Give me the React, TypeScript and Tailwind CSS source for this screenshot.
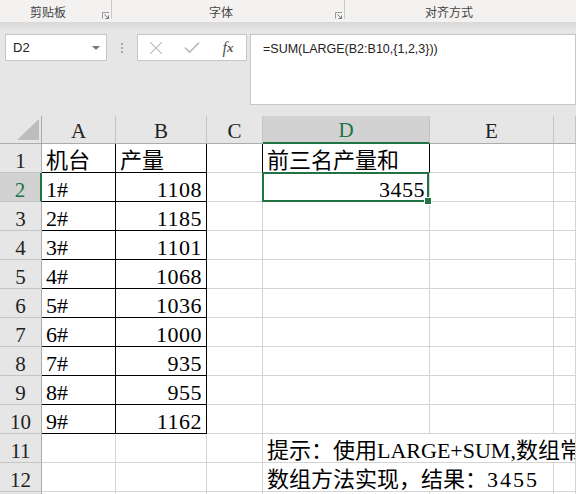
import React from "react";
import { X, Check } from "lucide-react";

const machines: [string, number][] = [
  ["1#", 1108],
  ["2#", 1185],
  ["3#", 1101],
  ["4#", 1068],
  ["5#", 1036],
  ["6#", 1000],
  ["7#", 935],
  ["8#", 955],
  ["9#", 1162],
];

const serif = "font-['Liberation_Serif','Noto_Sans_CJK_SC',serif]";

function Launcher() {
  return (
    <svg width="8" height="7" viewBox="0 0 8 7" className="mt-[12px]">
      <path d="M0.5 6.5V0.5H7" stroke="#9a9a9a" fill="none" />
      <path d="M2.5 2.5L6.5 6.5M3.5 6.5H6.5V3.5" stroke="#7a7a7a" fill="none" />
    </svg>
  );
}

function Ribbon() {
  return (
    <div className="h-[22px] bg-[#f3f2f1] flex font-['Noto_Sans_CJK_SC',sans-serif] text-[12px] text-[#444]">
      <div className="flex w-[112px] h-[19px] border-r border-r-[#c8c8c8]">
        <span className="w-[96px] text-center mt-[5px] leading-[13px]">剪贴板</span>
        <div className="ml-[6px]">
          <Launcher />
        </div>
      </div>
      <div className="flex w-[233px] h-[19px] border-r border-r-[#c8c8c8]">
        <span className="w-[218px] text-center mt-[5px] leading-[13px]">字体</span>
        <div className="ml-[5px]">
          <Launcher />
        </div>
      </div>
      <div className="flex w-[208px] h-[19px]">
        <span className="w-[208px] text-center mt-[5px] leading-[13px]">对齐方式</span>
      </div>
    </div>
  );
}

function FormulaBar() {
  return (
    <div className="h-[86px] flex items-start pt-[4px] font-['Liberation_Sans','Noto_Sans_CJK_SC',sans-serif]">
      <div className="ml-[5px] w-[102px] h-[27px] bg-white border border-[#c6c6c6] flex items-center justify-between pl-[7px] pr-[6px]">
        <span className="text-[13px] text-[#222]">D2</span>
        <svg width="8" height="4" viewBox="0 0 8 4">
          <path d="M0 0H8L4 4Z" fill="#7a7a7a" />
        </svg>
      </div>
      <div className="w-[30px] h-[27px] flex flex-col items-center justify-center gap-[2px]">
        <span className="w-[2px] h-[2px] bg-[#a8a8a8]" />
        <span className="w-[2px] h-[2px] bg-[#a8a8a8]" />
        <span className="w-[2px] h-[2px] bg-[#a8a8a8]" />
      </div>
      <div className="w-[110px] h-[27px] bg-white border border-[#c6c6c6] flex">
        <div className="w-[36px] flex items-center justify-center">
          <X size={22} strokeWidth={1.1} color="#b0b0b0" />
        </div>
        <div className="w-[36px] flex items-center justify-center">
          <Check size={20} strokeWidth={1.8} color="#b4b4b4" />
        </div>
        <div className="w-[36px] flex items-center justify-center text-[#555] italic font-['Liberation_Serif',serif] text-[16px] leading-none">
          f<span className="text-[13px] font-bold">x</span>
        </div>
      </div>
      <div className="ml-[3px] flex-1 h-[71px] bg-white border border-[#c6c6c6] pl-[12px] pt-[7px] text-[12.5px] text-[#222] leading-[14px] whitespace-nowrap">
        =SUM(LARGE(B2:B10,{"{"}1,2,3{"}"}))
      </div>
    </div>
  );
}

type Line = "grid" | "black";

function Cell({
  children,
  r = "grid",
  b = "grid",
  right,
  className = "",
}: {
  children?: React.ReactNode;
  r?: Line;
  b?: Line;
  right?: boolean;
  className?: string;
}) {
  const rc = r === "black" ? "border-r-black" : "border-r-[#d4d4d4]";
  const bc = b === "black" ? "border-b-black" : "border-b-[#d4d4d4]";
  return (
    <div
      className={`flex items-end overflow-hidden whitespace-nowrap bg-white border-r border-b ${rc} ${bc} px-[4px] leading-none text-[22px] text-black ${
        right ? "justify-end" : "justify-start"
      } ${className}`}
    >
      {children}
    </div>
  );
}

function ColHead({ label, active }: { label: string; active?: boolean }) {
  return (
    <div
      className={`flex items-end justify-center pb-[1px] leading-none text-[21px] border-r border-r-[#c4c4c4] ${
        active
          ? "bg-[#d2d2d2] text-[#217346] border-b-2 border-b-[#217346]"
          : "bg-[#e6e6e6] text-[#222] border-b border-b-[#ababab]"
      }`}
    >
      {label}
    </div>
  );
}

function RowHead({ n, active }: { n?: number; active?: boolean }) {
  return (
    <div
      className={`flex items-end justify-center leading-none text-[21px] border-b border-b-[#c4c4c4] ${
        active
          ? "bg-[#d2d2d2] text-[#217346] border-r-2 border-r-[#217346]"
          : "bg-[#e6e6e6] text-[#222] border-r border-r-[#ababab]"
      }`}
    >
      {n}
    </div>
  );
}

// digits in the reference run a little wider than Liberation Serif
const num = "tracking-[0.5px]";

function Sheet() {
  const rows: React.ReactNode[] = [];
  for (let n = 1; n <= 13; n++) {
    const inTable = n <= 10;
    const a = n === 1 ? "机台" : inTable ? machines[n - 2][0] : "";
    const bVal = n === 1 ? "产量" : inTable ? String(machines[n - 2][1]) : "";
    rows.push(<RowHead key={`h${n}`} n={n <= 12 ? n : undefined} active={n === 2} />);
    rows.push(
      <Cell key={`a${n}`} r={inTable ? "black" : "grid"} b={inTable ? "black" : "grid"}>
        {a}
      </Cell>
    );
    rows.push(
      <Cell
        key={`b${n}`}
        r={inTable ? "black" : "grid"}
        b={inTable ? "black" : "grid"}
        right={n !== 1}
        className={n !== 1 ? num : ""}
      >
        {bVal}
      </Cell>
    );
    rows.push(<Cell key={`c${n}`} r={n === 1 ? "black" : "grid"} />);
    if (n === 1) {
      rows.push(
        <Cell key="d1" r="black">
          前三名产量和
        </Cell>
      );
      rows.push(<Cell key="e1" />);
      rows.push(<Cell key="f1" />);
    } else if (n === 2) {
      rows.push(
        <div
          key="d2"
          className={`relative flex items-end justify-end bg-white border-r border-b border-r-[#d4d4d4] border-b-[#d4d4d4] px-[4px] leading-none text-[22px] text-black ${num}`}
        >
          3455
          <div className="absolute -left-[1px] -top-[1px] right-0 -bottom-[1px] border-2 border-[#217346]" />
          <div className="absolute -right-[3px] -bottom-[4px] w-[6px] h-[6px] bg-[#217346] border border-white box-content" />
        </div>
      );
      rows.push(<Cell key="e2" />);
      rows.push(<Cell key="f2" />);
    } else if (n === 11) {
      rows.push(
        <Cell key="d11" className="col-span-3">
          提示：使用LARGE+SUM,数组常量
        </Cell>
      );
    } else if (n === 12) {
      rows.push(
        <Cell key="d12" className="col-span-2">
          数组方法实现，结果：<span className="tracking-[2px]">3455</span>
        </Cell>
      );
      rows.push(<Cell key="f12" />);
    } else {
      rows.push(<Cell key={`d${n}`} />);
      rows.push(<Cell key={`e${n}`} />);
      rows.push(<Cell key={`f${n}`} />);
    }
  }

  return (
    <div
      className={`grid grid-cols-[42px_74px_91px_56px_167px_124px_1fr] grid-rows-[28px_repeat(13,29px)] ${serif}`}
    >
      <div className="bg-[#e6e6e6] border-r border-r-[#ababab] border-b border-b-[#ababab] relative">
        <svg width="22" height="21" viewBox="0 0 22 21" className="absolute left-[17px] top-[3px]">
          <polygon points="22,0 22,21 0,21" fill="#bdbdbd" />
        </svg>
      </div>
      <ColHead label="A" />
      <ColHead label="B" />
      <ColHead label="C" />
      <ColHead label="D" active />
      <ColHead label="E" />
      <ColHead label="" />
      {rows}
    </div>
  );
}

export default function App() {
  return (
    <div className="w-[576px] h-[494px] overflow-hidden bg-[#e6e6e6]">
      <Ribbon />
      <div className="h-[8px] bg-gradient-to-b from-[#d8d8d8] to-[#e6e6e6] -mb-[8px] relative" />
      <div className="pt-[8px]">
        <FormulaBar />
      </div>
      <Sheet />
    </div>
  );
}
